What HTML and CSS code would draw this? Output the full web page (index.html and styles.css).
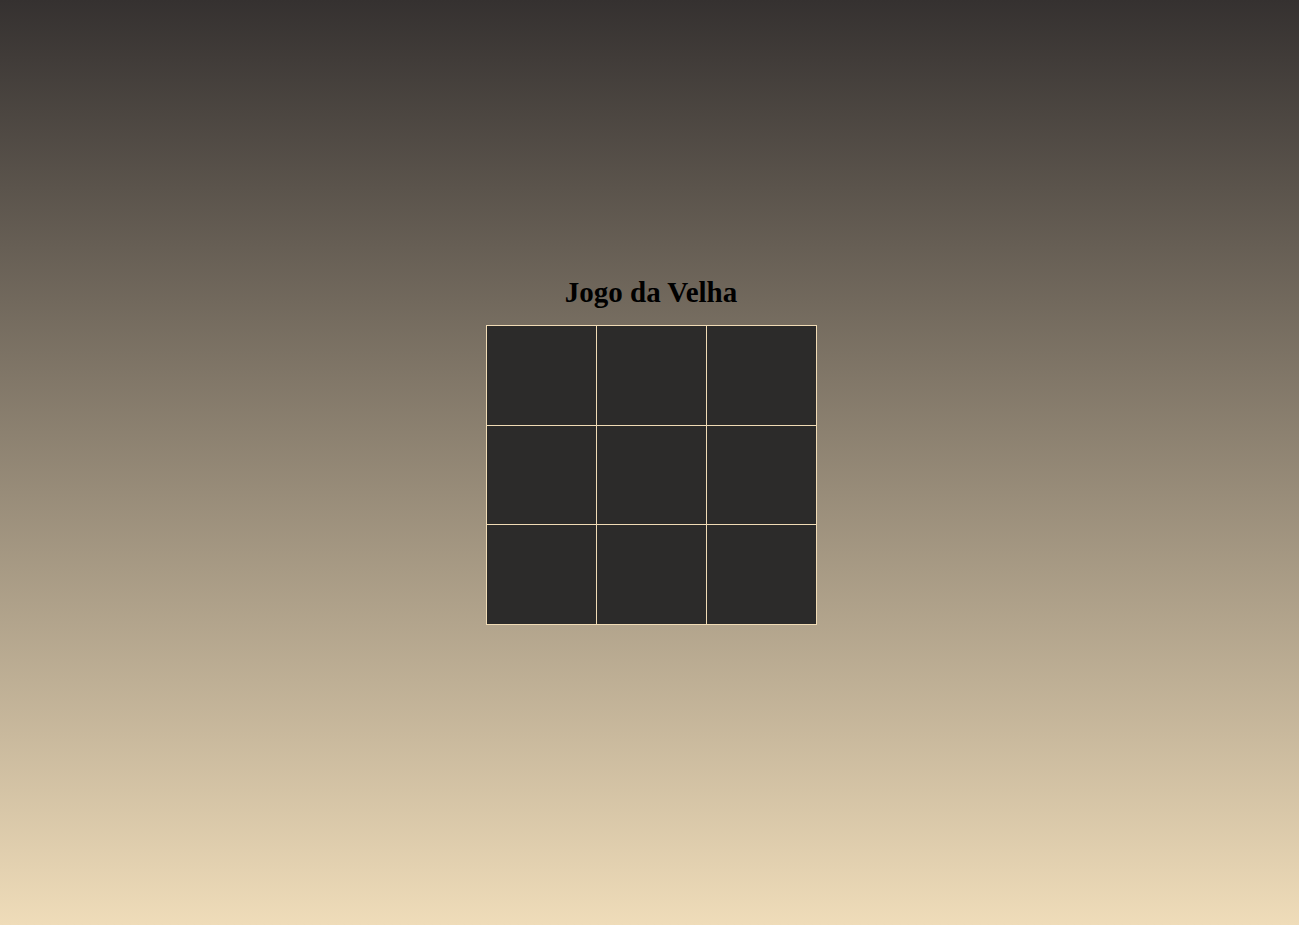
FILE: index.html
```html
<!DOCTYPE html>
<html lang="pt">
<head>
<meta charset="utf-8">
<title>Jogo da Velha</title>
<link rel="stylesheet" href="styles.css">
</head>
<body>
<main class="game">
  <h1 class="title">Jogo da Velha</h1>
  <div class="board">
    <div class="cell"></div><div class="cell"></div><div class="cell"></div>
    <div class="cell"></div><div class="cell"></div><div class="cell"></div>
    <div class="cell"></div><div class="cell"></div><div class="cell"></div>
  </div>
</main>
</body>
</html>
```

FILE: styles.css
```css
html, body {
  margin: 0;
  height: 100%;
}
body {
  background: linear-gradient(to bottom, #353130, #efdcb9);
  font-family: "Liberation Serif", "Times New Roman", serif;
}
.game {
  display: flex;
  flex-direction: column;
  align-items: center;
  padding-top: 276px;
  padding-left: 3px;
}
.title {
  margin: 0 0 16px;
  font-size: 29px;
  line-height: 33px;
  font-weight: bold;
  color: #000;
}
.board {
  display: grid;
  grid-template-columns: 109px 109px 109px;
  grid-template-rows: 99px 98px 99px;
  gap: 1px;
  padding: 1px;
  background: #f0dbb5;
}
.cell {
  background: #2c2b2a;
}
```
